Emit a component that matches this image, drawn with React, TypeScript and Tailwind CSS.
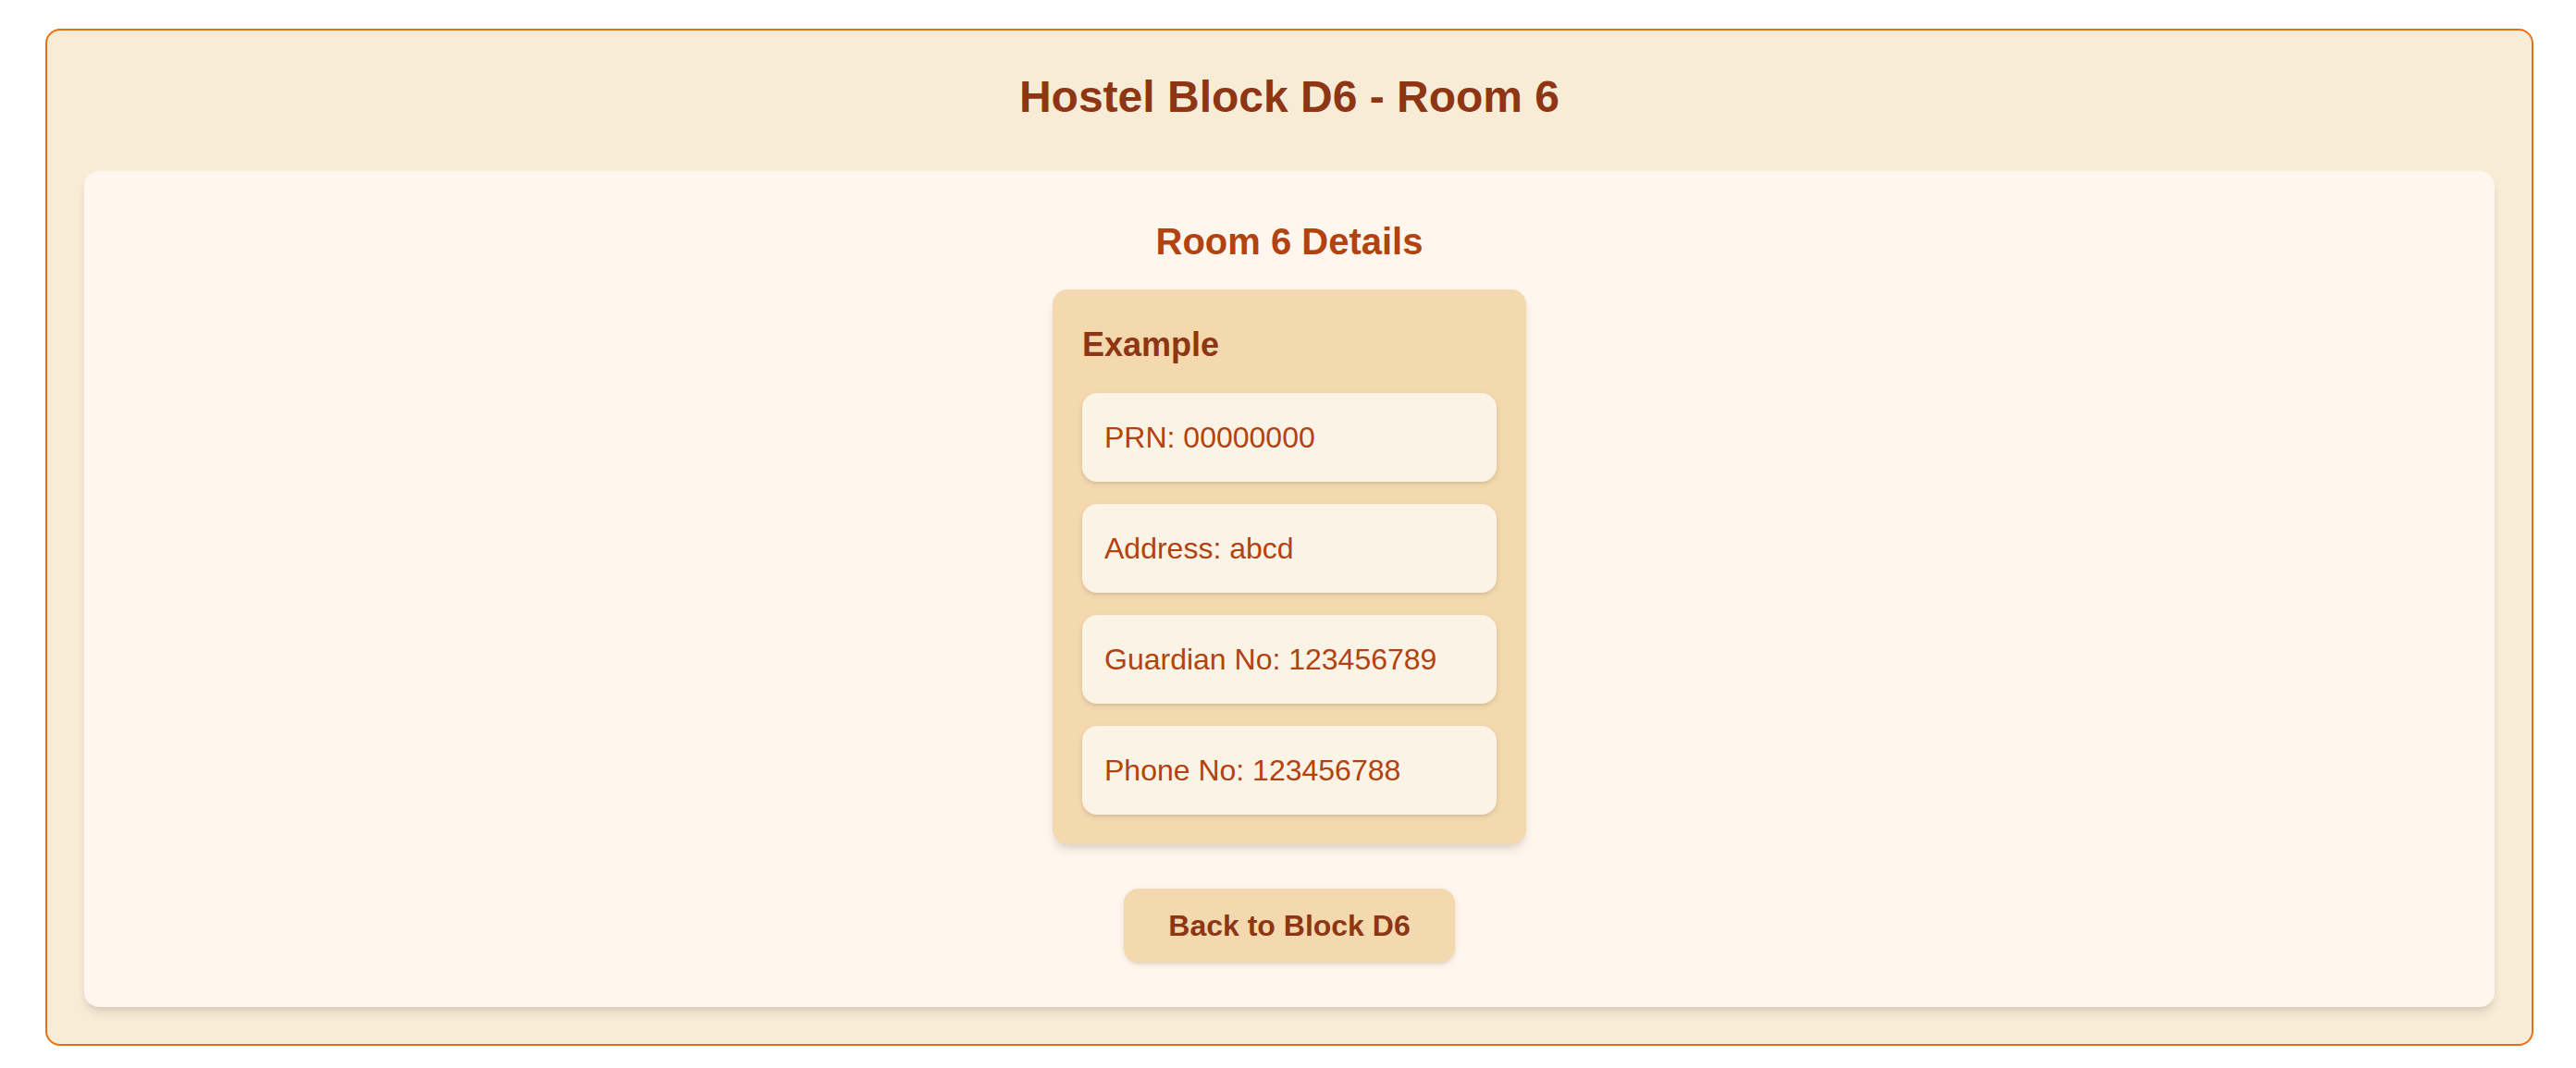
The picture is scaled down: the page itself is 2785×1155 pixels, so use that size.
const details = [
  { label: "PRN", value: "00000000" },
  { label: "Address", value: "abcd" },
  { label: "Guardian No", value: "123456789" },
  { label: "Phone No", value: "123456788" },
];

export default function App() {
  return (
    <main className="bg-white pt-[31px] pr-[46px] pb-6 pl-[49px] font-['Liberation_Sans',Arial,sans-serif]">
      <div className="rounded-2xl border-2 border-[#e86f12] bg-[#f9ecd7] p-10">
        <h1 className="mb-12 text-center text-[48px] leading-[64px] font-bold text-[#8e3614]">
          Hostel Block D6 - Room 6
        </h1>
        <section className="flex flex-col items-center rounded-2xl bg-[#fff7ed] p-12 shadow-[0_8px_12px_-2px_rgba(0,0,0,0.1),0_4px_8px_-4px_rgba(0,0,0,0.1)]">
          <h2 className="mb-6 text-[40px] leading-[56px] font-bold text-[#b2420e]">
            Room 6 Details
          </h2>
          <article className="w-full max-w-[512px] rounded-2xl bg-[#f4d9ae] p-8 shadow-[0_8px_12px_-2px_rgba(0,0,0,0.1),0_4px_8px_-4px_rgba(0,0,0,0.1)]">
            <h3 className="mb-6 text-[36px] leading-[56px] font-bold text-[#8e3614]">
              Example
            </h3>
            <ul className="flex flex-col gap-6">
              {details.map((item) => (
                <li
                  key={item.label}
                  className="rounded-2xl bg-[#fcf3e7] p-6 text-[32px] leading-[48px] text-[#b2420e] shadow-[0_2px_6px_0_rgba(0,0,0,0.1),0_2px_4px_-2px_rgba(0,0,0,0.1)]"
                >
                  {item.label}: {item.value}
                </li>
              ))}
            </ul>
          </article>
          <button
            type="button"
            className="mt-12 cursor-pointer rounded-2xl bg-[#f4d9ae] px-12 py-4 text-[32px] leading-[48px] font-bold text-[#8e3614] shadow-[0_2px_6px_0_rgba(0,0,0,0.1),0_2px_4px_-2px_rgba(0,0,0,0.1)]"
          >
            Back to Block D6
          </button>
        </section>
      </div>
    </main>
  );
}
